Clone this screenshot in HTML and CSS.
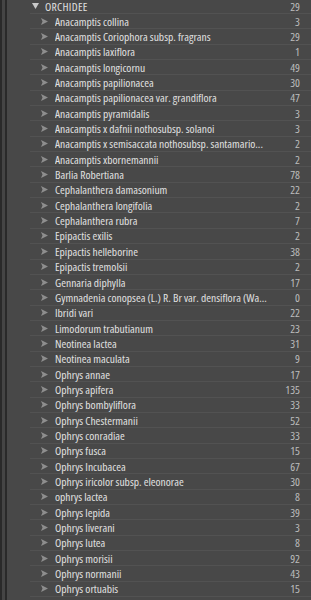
FILE: index.html
```html
<!DOCTYPE html>
<html lang="it">
<head>
  <meta charset="UTF-8">
  <meta name="viewport" content="width=device-width, initial-scale=1.0">
  <title>Raccolte - Orchidee</title>
  <link rel="stylesheet" href="styles.css">
</head>
<body>
  <div class="frame">
    <div class="panel">
      <div class="row group">
        <svg class="twisty" width="7" height="6" viewBox="0 0 7 6"><path d="M0 0H7L3.5 6Z"/></svg>
        <span class="name">ORCHIDEE</span>
        <span class="count">29</span>
      </div>

      <ul class="list">
        <li class="row"><svg class="icon" width="7" height="7" viewBox="0 0 7 7"><path d="M0 0L7 3.5L0 7L1.5 3.5Z"/></svg><span class="name">Anacamptis collina</span><span class="count">3</span></li>
        <li class="row"><svg class="icon" width="7" height="7" viewBox="0 0 7 7"><path d="M0 0L7 3.5L0 7L1.5 3.5Z"/></svg><span class="name">Anacamptis Coriophora subsp. fragrans</span><span class="count">29</span></li>
        <li class="row"><svg class="icon" width="7" height="7" viewBox="0 0 7 7"><path d="M0 0L7 3.5L0 7L1.5 3.5Z"/></svg><span class="name">Anacamptis laxiflora</span><span class="count">1</span></li>
        <li class="row"><svg class="icon" width="7" height="7" viewBox="0 0 7 7"><path d="M0 0L7 3.5L0 7L1.5 3.5Z"/></svg><span class="name">Anacamptis longicornu</span><span class="count">49</span></li>
        <li class="row"><svg class="icon" width="7" height="7" viewBox="0 0 7 7"><path d="M0 0L7 3.5L0 7L1.5 3.5Z"/></svg><span class="name">Anacamptis papilionacea</span><span class="count">30</span></li>
        <li class="row"><svg class="icon" width="7" height="7" viewBox="0 0 7 7"><path d="M0 0L7 3.5L0 7L1.5 3.5Z"/></svg><span class="name">Anacamptis papilionacea var. grandiflora</span><span class="count">47</span></li>
        <li class="row"><svg class="icon" width="7" height="7" viewBox="0 0 7 7"><path d="M0 0L7 3.5L0 7L1.5 3.5Z"/></svg><span class="name">Anacamptis pyramidalis</span><span class="count">3</span></li>
        <li class="row"><svg class="icon" width="7" height="7" viewBox="0 0 7 7"><path d="M0 0L7 3.5L0 7L1.5 3.5Z"/></svg><span class="name">Anacamptis x dafnii nothosubsp. solanoi</span><span class="count">3</span></li>
        <li class="row"><svg class="icon" width="7" height="7" viewBox="0 0 7 7"><path d="M0 0L7 3.5L0 7L1.5 3.5Z"/></svg><span class="name">Anacamptis x semisaccata nothosubsp. santamario...</span><span class="count">2</span></li>
        <li class="row"><svg class="icon" width="7" height="7" viewBox="0 0 7 7"><path d="M0 0L7 3.5L0 7L1.5 3.5Z"/></svg><span class="name">Anacamptis xbornemannii</span><span class="count">2</span></li>
        <li class="row"><svg class="icon" width="7" height="7" viewBox="0 0 7 7"><path d="M0 0L7 3.5L0 7L1.5 3.5Z"/></svg><span class="name">Barlia Robertiana</span><span class="count">78</span></li>
        <li class="row"><svg class="icon" width="7" height="7" viewBox="0 0 7 7"><path d="M0 0L7 3.5L0 7L1.5 3.5Z"/></svg><span class="name">Cephalanthera damasonium</span><span class="count">22</span></li>
        <li class="row"><svg class="icon" width="7" height="7" viewBox="0 0 7 7"><path d="M0 0L7 3.5L0 7L1.5 3.5Z"/></svg><span class="name">Cephalanthera longifolia</span><span class="count">2</span></li>
        <li class="row"><svg class="icon" width="7" height="7" viewBox="0 0 7 7"><path d="M0 0L7 3.5L0 7L1.5 3.5Z"/></svg><span class="name">Cephalanthera rubra</span><span class="count">7</span></li>
        <li class="row"><svg class="icon" width="7" height="7" viewBox="0 0 7 7"><path d="M0 0L7 3.5L0 7L1.5 3.5Z"/></svg><span class="name">Epipactis exilis</span><span class="count">2</span></li>
        <li class="row"><svg class="icon" width="7" height="7" viewBox="0 0 7 7"><path d="M0 0L7 3.5L0 7L1.5 3.5Z"/></svg><span class="name">Epipactis helleborine</span><span class="count">38</span></li>
        <li class="row"><svg class="icon" width="7" height="7" viewBox="0 0 7 7"><path d="M0 0L7 3.5L0 7L1.5 3.5Z"/></svg><span class="name">Epipactis tremolsii</span><span class="count">2</span></li>
        <li class="row"><svg class="icon" width="7" height="7" viewBox="0 0 7 7"><path d="M0 0L7 3.5L0 7L1.5 3.5Z"/></svg><span class="name">Gennaria diphylla</span><span class="count">17</span></li>
        <li class="row"><svg class="icon" width="7" height="7" viewBox="0 0 7 7"><path d="M0 0L7 3.5L0 7L1.5 3.5Z"/></svg><span class="name">Gymnadenia conopsea (L.) R. Br var. densiflora (Wa...</span><span class="count">0</span></li>
        <li class="row"><svg class="icon" width="7" height="7" viewBox="0 0 7 7"><path d="M0 0L7 3.5L0 7L1.5 3.5Z"/></svg><span class="name">Ibridi vari</span><span class="count">22</span></li>
        <li class="row"><svg class="icon" width="7" height="7" viewBox="0 0 7 7"><path d="M0 0L7 3.5L0 7L1.5 3.5Z"/></svg><span class="name">Limodorum trabutianum</span><span class="count">23</span></li>
        <li class="row"><svg class="icon" width="7" height="7" viewBox="0 0 7 7"><path d="M0 0L7 3.5L0 7L1.5 3.5Z"/></svg><span class="name">Neotinea lactea</span><span class="count">31</span></li>
        <li class="row"><svg class="icon" width="7" height="7" viewBox="0 0 7 7"><path d="M0 0L7 3.5L0 7L1.5 3.5Z"/></svg><span class="name">Neotinea maculata</span><span class="count">9</span></li>
        <li class="row"><svg class="icon" width="7" height="7" viewBox="0 0 7 7"><path d="M0 0L7 3.5L0 7L1.5 3.5Z"/></svg><span class="name">Ophrys annae</span><span class="count">17</span></li>
        <li class="row"><svg class="icon" width="7" height="7" viewBox="0 0 7 7"><path d="M0 0L7 3.5L0 7L1.5 3.5Z"/></svg><span class="name">Ophrys apifera</span><span class="count">135</span></li>
        <li class="row"><svg class="icon" width="7" height="7" viewBox="0 0 7 7"><path d="M0 0L7 3.5L0 7L1.5 3.5Z"/></svg><span class="name">Ophrys bombyliflora</span><span class="count">33</span></li>
        <li class="row"><svg class="icon" width="7" height="7" viewBox="0 0 7 7"><path d="M0 0L7 3.5L0 7L1.5 3.5Z"/></svg><span class="name">Ophrys Chestermanii</span><span class="count">52</span></li>
        <li class="row"><svg class="icon" width="7" height="7" viewBox="0 0 7 7"><path d="M0 0L7 3.5L0 7L1.5 3.5Z"/></svg><span class="name">Ophrys conradiae</span><span class="count">33</span></li>
        <li class="row"><svg class="icon" width="7" height="7" viewBox="0 0 7 7"><path d="M0 0L7 3.5L0 7L1.5 3.5Z"/></svg><span class="name">Ophrys fusca</span><span class="count">15</span></li>
        <li class="row"><svg class="icon" width="7" height="7" viewBox="0 0 7 7"><path d="M0 0L7 3.5L0 7L1.5 3.5Z"/></svg><span class="name">Ophrys Incubacea</span><span class="count">67</span></li>
        <li class="row"><svg class="icon" width="7" height="7" viewBox="0 0 7 7"><path d="M0 0L7 3.5L0 7L1.5 3.5Z"/></svg><span class="name">Ophrys iricolor subsp. eleonorae</span><span class="count">30</span></li>
        <li class="row"><svg class="icon" width="7" height="7" viewBox="0 0 7 7"><path d="M0 0L7 3.5L0 7L1.5 3.5Z"/></svg><span class="name">ophrys lactea</span><span class="count">8</span></li>
        <li class="row"><svg class="icon" width="7" height="7" viewBox="0 0 7 7"><path d="M0 0L7 3.5L0 7L1.5 3.5Z"/></svg><span class="name">Ophrys lepida</span><span class="count">39</span></li>
        <li class="row"><svg class="icon" width="7" height="7" viewBox="0 0 7 7"><path d="M0 0L7 3.5L0 7L1.5 3.5Z"/></svg><span class="name">Ophrys liverani</span><span class="count">3</span></li>
        <li class="row"><svg class="icon" width="7" height="7" viewBox="0 0 7 7"><path d="M0 0L7 3.5L0 7L1.5 3.5Z"/></svg><span class="name">Ophrys lutea</span><span class="count">8</span></li>
        <li class="row"><svg class="icon" width="7" height="7" viewBox="0 0 7 7"><path d="M0 0L7 3.5L0 7L1.5 3.5Z"/></svg><span class="name">Ophrys morisii</span><span class="count">92</span></li>
        <li class="row"><svg class="icon" width="7" height="7" viewBox="0 0 7 7"><path d="M0 0L7 3.5L0 7L1.5 3.5Z"/></svg><span class="name">Ophrys normanii</span><span class="count">43</span></li>
        <li class="row"><svg class="icon" width="7" height="7" viewBox="0 0 7 7"><path d="M0 0L7 3.5L0 7L1.5 3.5Z"/></svg><span class="name">Ophrys ortuabis</span><span class="count">15</span></li>
      </ul>
    </div>
  </div>
</body>
</html>
```

FILE: styles.css
```css
:root {
  --panel-bg: #484848;
  --edge: #2a2a2a;
  --text: #e0e0e0;
  --count: #bdbdbd;
  --icon: #8e8e8e;
  --row-line: rgba(255, 255, 255, 0.06);
  --row-height: 15.35px;
}

* {
  box-sizing: border-box;
  margin: 0;
  padding: 0;
}

body {
  background-color: var(--panel-bg);
  color: var(--text);
  font-family: 'Open Sans', 'Liberation Sans', sans-serif;
  font-stretch: 79%;
  font-size: 11.5px;
  overflow: hidden;
}

.frame {
  border-left: 2px solid var(--edge);
  background-color: #454545;
  height: 600px;
}

.panel {
  margin-left: 3px;
  border-left: 2px solid var(--edge);
  background-color: var(--panel-bg);
  height: 100%;
}

.list {
  list-style: none;
}

.row {
  display: flex;
  align-items: center;
  height: var(--row-height);
  margin-left: 23px;
  padding-left: 11px;
  padding-right: 11px;
  border-bottom: 1px solid var(--row-line);
  white-space: nowrap;
}

.group {
  height: 14px;
  padding-left: 2px;
  padding-bottom: 1px;
}

.twisty {
  flex: none;
  fill: #c9c9c9;
  margin-right: 6px;
}

.group .name {
  letter-spacing: 0.3px;
}

.icon {
  flex: none;
  fill: var(--icon);
  margin-right: 7px;
}

.name {
  flex: 1;
  overflow: hidden;
  text-overflow: ellipsis;
}

.count {
  flex: none;
  margin-left: 8px;
  color: var(--count);
  text-align: right;
}
```
